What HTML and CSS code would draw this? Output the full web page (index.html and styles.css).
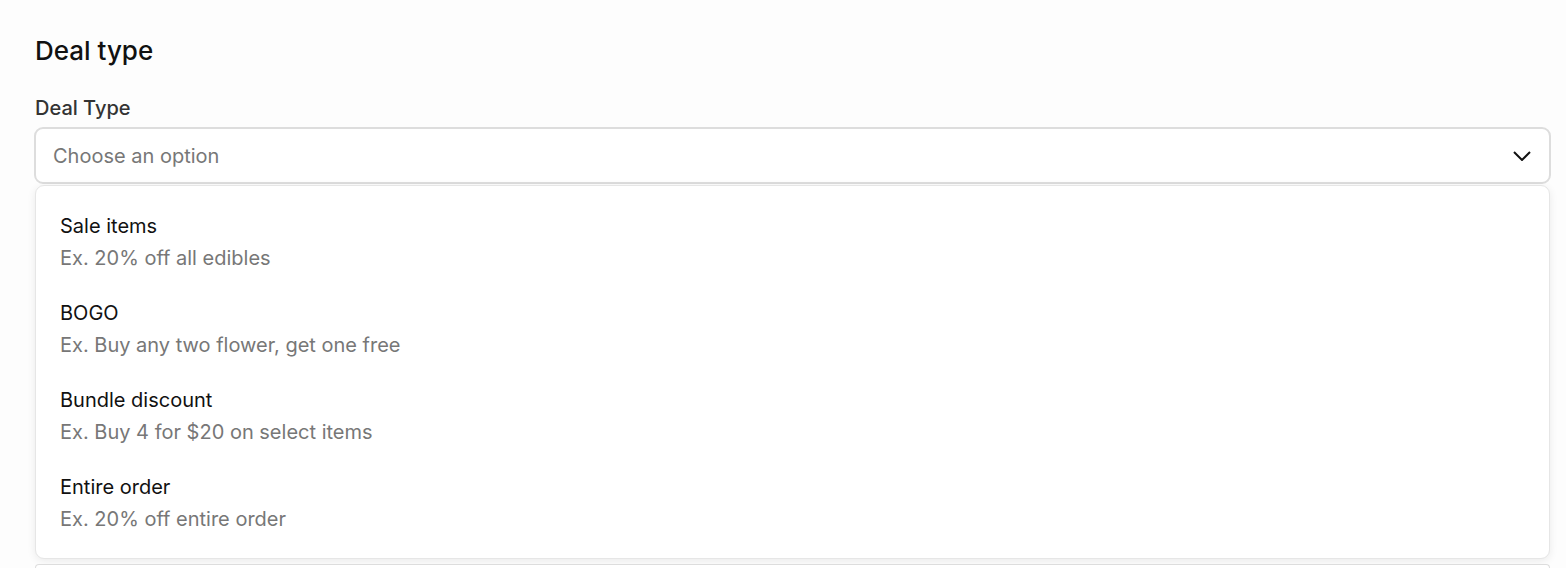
FILE: index.html
```html
<!DOCTYPE html>
<html lang="en">
<head>
    <meta charset="UTF-8">
    <meta name="viewport" content="width=device-width, initial-scale=1.0">
    <title>Deal type</title>
    <link rel="stylesheet" href="styles.css">
</head>
<body>
    <div id="container">
        <h2 class="section-title">Deal type</h2>
        <label class="field-label">Deal Type</label>
        <div class="select">
            <span class="placeholder">Choose an option</span>
            <svg class="chevron" width="18" height="10" viewBox="0 0 18 10">
                <path d="M1 1 L9 9 L17 1" fill="none" stroke="#111" stroke-width="2"/>
            </svg>
        </div>
        <ul class="menu">
            <li class="option">
                <div class="option-title">Sale items</div>
                <div class="option-desc">Ex. 20% off all edibles</div>
            </li>
            <li class="option">
                <div class="option-title">BOGO</div>
                <div class="option-desc">Ex. Buy any two flower, get one free</div>
            </li>
            <li class="option">
                <div class="option-title">Bundle discount</div>
                <div class="option-desc">Ex. Buy 4 for $20 on select items</div>
            </li>
            <li class="option">
                <div class="option-title">Entire order</div>
                <div class="option-desc">Ex. 20% off entire order</div>
            </li>
        </ul>
        <div class="next-field"></div>
    </div>
</body>
</html>
```

FILE: styles.css
```css
body {
    margin: 0;
    font-family: Inter, "Noto Sans", sans-serif;
    background-color: #fdfdfd;
    color: #111;
}
#container {
    padding: 34px 15px 0 34px;
}
.section-title {
    font-size: 26px;
    font-weight: 500;
    line-height: 34px;
    margin: 0 0 26px 1px;
}
.field-label {
    display: block;
    font-size: 20px;
    font-weight: 500;
    line-height: 28px;
    color: #333;
    margin: 0 0 5px 1px;
}
.select {
    display: flex;
    align-items: center;
    justify-content: space-between;
    height: 53px;
    padding: 0 18px 0 17px;
    border: 2px solid #ddd;
    border-radius: 9px;
    background-color: #fff;
}
.placeholder {
    font-size: 20px;
    color: #777;
}
.chevron {
    display: block;
}
.menu {
    list-style: none;
    margin: 1px 1px 0 1px;
    padding: 13px 0 11px;
    background-color: #fff;
    border: 1px solid #e6e6e6;
    border-radius: 9px;
    box-shadow: 0 2px 8px rgba(0, 0, 0, 0.08);
}
.option {
    padding: 11px 24px 12px;
}
.option-title {
    font-size: 20px;
    line-height: 32px;
    color: #111;
}
.option-desc {
    font-size: 20px;
    line-height: 32px;
    color: #777;
}
.next-field {
    height: 3px;
    margin: 5px 1px 0;
    border: 1px solid #ddd;
    border-bottom: none;
    border-radius: 9px 9px 0 0;
    background-color: #fff;
}
```
